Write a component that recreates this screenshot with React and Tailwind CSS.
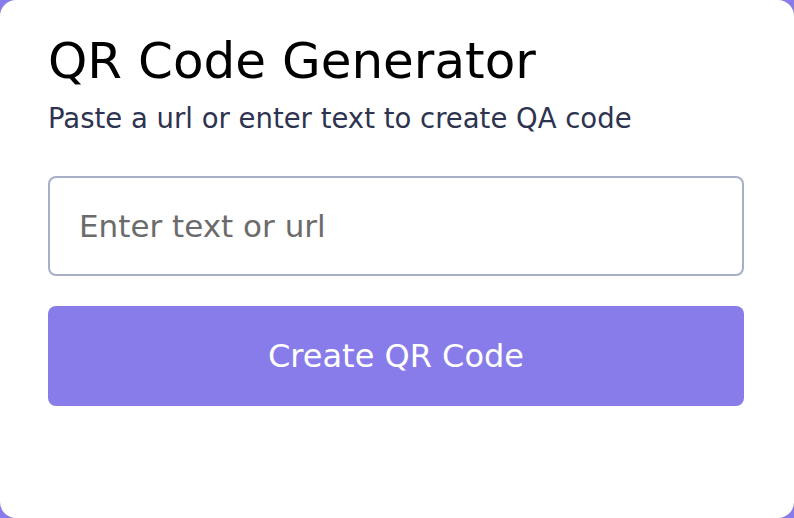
export default function App() {
  return (
    <div className="w-[794px] h-[518px] bg-[#877ce9] overflow-hidden" style={{ fontFamily: '"DejaVu Sans", sans-serif' }}>
      <div className="w-full h-full bg-white rounded-2xl pl-12 pr-[50px] pt-[33px]">
        <h1 className="text-[50px] leading-[56px] text-black font-normal">QR Code Generator</h1>
        <p className="mt-[11px] text-[27.5px] leading-[36px] text-[#2e3350]">Paste a url or enter text to create QA code</p>
        <input
          type="text"
          placeholder="Enter text or url"
          className="mt-[40px] block w-full h-[100px] border-2 border-[#a8b0c8] rounded-lg px-[29px] text-[31px] text-black placeholder:text-[#6b6b6b] outline-none"
        />
        <button className="mt-[30px] block w-full h-[100px] rounded-lg bg-[#877ce9] text-white text-[32px]">
          Create QR Code
        </button>
      </div>
    </div>
  );
}
